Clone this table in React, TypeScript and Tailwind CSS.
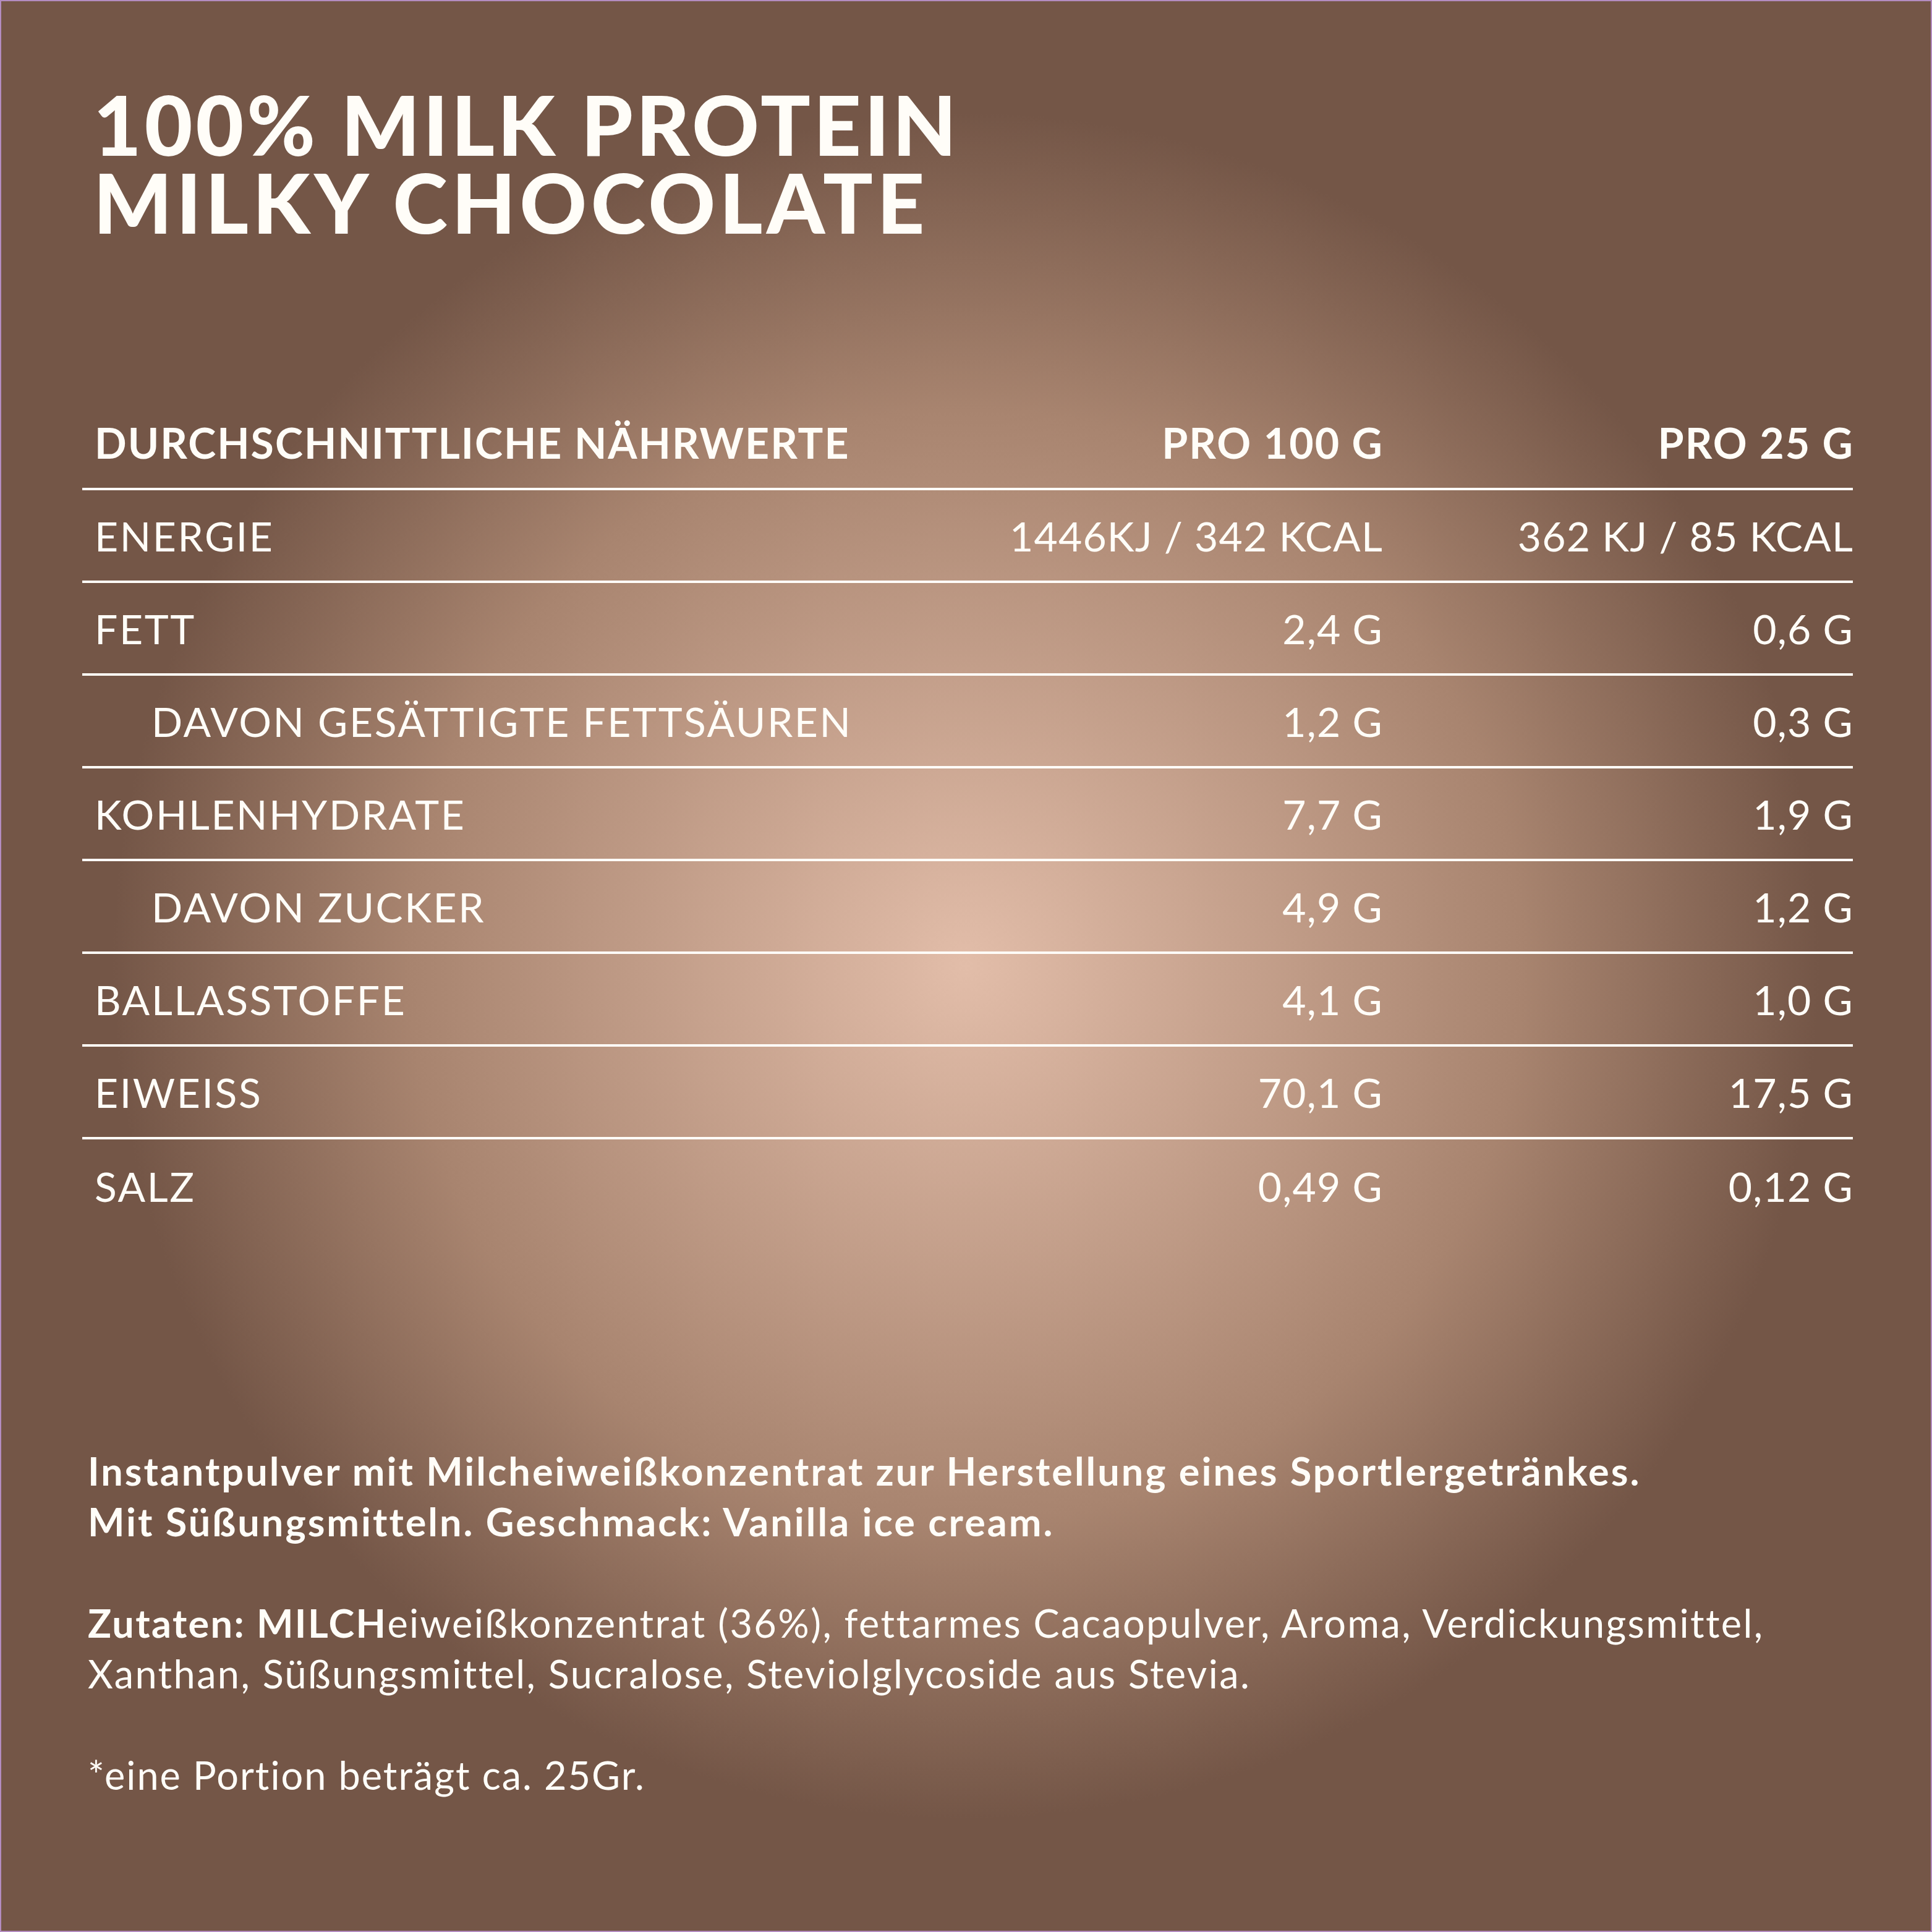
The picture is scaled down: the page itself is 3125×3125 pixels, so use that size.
import React from "react";

type Row = { label: string; a: string; b: string; indent?: boolean };

const rows: Row[] = [
  { label: "ENERGIE", a: "1446KJ / 342 KCAL", b: "362 KJ / 85 KCAL" },
  { label: "FETT", a: "2,4 G", b: "0,6 G" },
  { label: "DAVON GESÄTTIGTE FETTSÄUREN", a: "1,2 G", b: "0,3 G", indent: true },
  { label: "KOHLENHYDRATE", a: "7,7 G", b: "1,9 G" },
  { label: "DAVON ZUCKER", a: "4,9 G", b: "1,2 G", indent: true },
  { label: "BALLASSTOFFE", a: "4,1 G", b: "1,0 G" },
  { label: "EIWEISS", a: "70,1 G", b: "17,5 G" },
  { label: "SALZ", a: "0,49 G", b: "0,12 G" },
];

export default function App() {
  return (
    <div className="w-[3125px] h-[3125px] border-2 border-[#b48cc0] bg-[radial-gradient(circle_at_50%_50%,#e2bda9_0px,#a8846f_900px,#745647_1380px)] font-['Lato',sans-serif] text-[#fffdf8] flex flex-col pl-[131px] pr-[126px]">
      <h1 className="mt-[136px] ml-[18px] text-[134px] font-black tracking-[5px]">
        <div className="leading-[126px]">100% MILK PROTEIN</div>
        <div className="leading-[126px] tracking-[6.5px]">MILKY CHOCOLATE</div>
      </h1>

      <div className="mt-[253px] flex flex-col">
        <div className="grid grid-cols-[minmax(0,1fr)_700px_761px] items-center h-[150px] border-b-4 border-[#fffdf8] text-[68px] font-bold tracking-[2px] whitespace-nowrap">
          <div className="pl-[20px]">DURCHSCHNITTLICHE NÄHRWERTE</div>
          <div className="text-right mr-[-2px]">PRO 100 G</div>
          <div className="text-right mr-[-2px]">PRO 25 G</div>
        </div>
        {rows.map((r, i) => (
          <div
            key={r.label}
            className={
              "grid grid-cols-[minmax(0,1fr)_700px_761px] items-center h-[150px] text-[66px] font-normal whitespace-nowrap " +
              (i < rows.length - 1 ? "border-b-4 border-[#fffdf8]" : "")
            }
          >
            <div className={(r.indent ? "pl-[112px]" : "pl-[20px]") + " tracking-[2.6px]"}>{r.label}</div>
            <div className="text-right tracking-[1.2px] mr-[-1px]">{r.a}</div>
            <div className="text-right tracking-[1.2px] mr-[-1px]">{r.b}</div>
          </div>
        ))}
      </div>

      <div className="mt-[345px] pl-[9px] text-[63px] leading-[82px] tracking-[2.4px]">
        <p className="font-bold tracking-[3px]">
          Instantpulver mit Milcheiweißkonzentrat zur Herstellung eines Sportlergetränkes.
          <br />
          Mit Süßungsmitteln. Geschmack: Vanilla ice cream.
        </p>
        <p className="mt-[82px]">
          <span className="font-bold">Zutaten: MILCH</span>eiweißkonzentrat (36%), fettarmes Cacaopulver, Aroma, Verdickungsmittel,
          <br />
          Xanthan, Süßungsmittel, Sucralose, Steviolglycoside aus Stevia.
        </p>
        <p className="mt-[82px] tracking-[2px]">*eine Portion beträgt ca. 25Gr.</p>
      </div>
    </div>
  );
}
